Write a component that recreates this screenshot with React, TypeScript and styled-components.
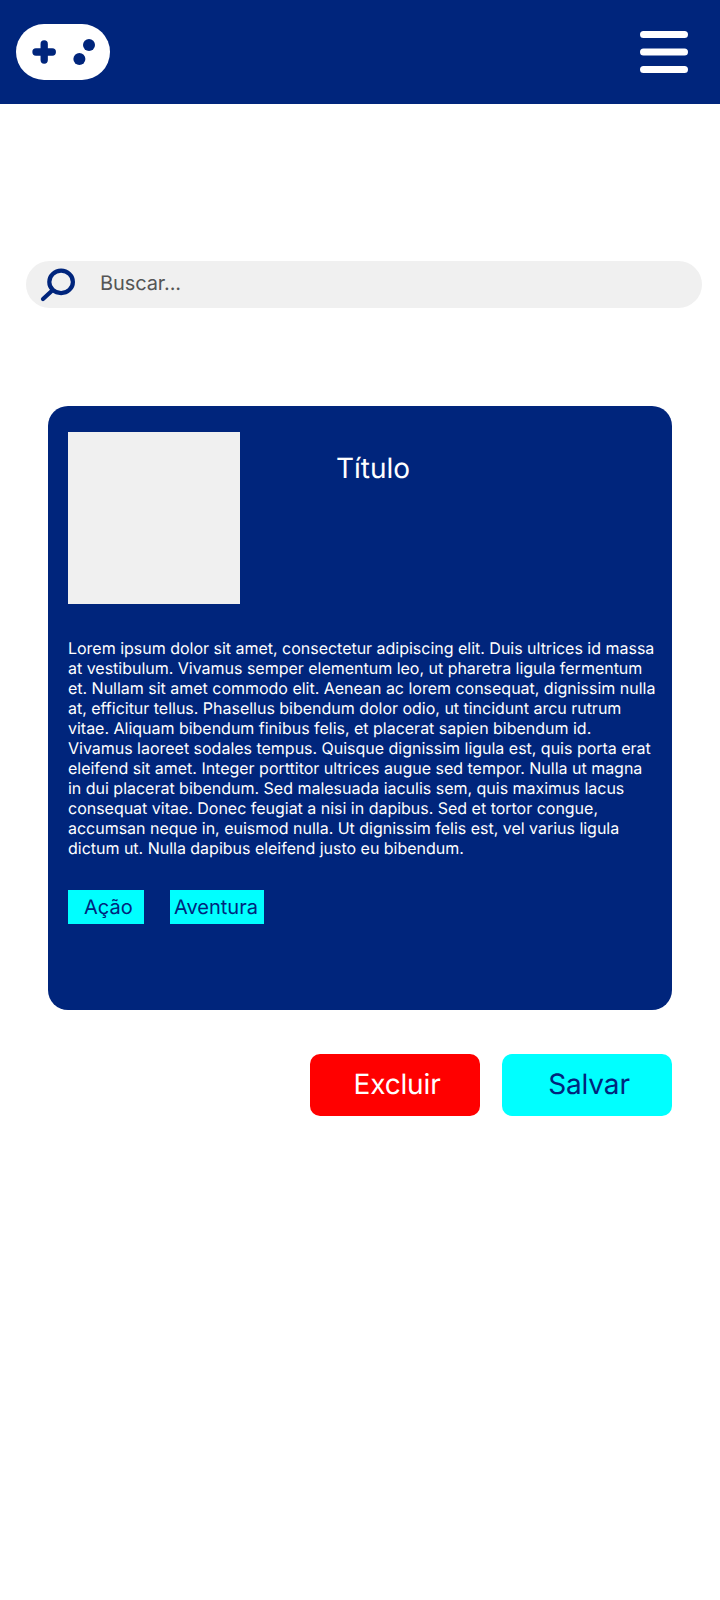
import React from "react";
import styled, { createGlobalStyle } from "styled-components";

const navy = "#00257c";
const cyan = "#00ffff";
const grey = "#f0f0f0";

const GlobalStyle = createGlobalStyle`
  *, *::before, *::after { box-sizing: border-box; }
  body {
    margin: 0;
    background: #fff;
    font-family: Inter, "Liberation Sans", sans-serif;
    text-rendering: geometricPrecision;
  }
  button { font: inherit; border: 0; cursor: pointer; text-rendering: inherit; }
`;

const Page = styled.div`
  min-height: 1600px;
  background: #fff;
`;

const Header = styled.header`
  display: flex;
  align-items: center;
  justify-content: space-between;
  height: 104px;
  padding: 0 32px 0 16px;
  background: ${navy};
`;

const Logo = styled.svg`
  display: block;
  width: 94px;
  height: 56px;
`;

const MenuButton = styled.button`
  width: 48px;
  height: 42px;
  padding: 0;
  background: none;
`;

const MenuIcon = styled.svg`
  display: block;
  width: 48px;
  height: 42px;
`;

const SearchBar = styled.label`
  display: flex;
  align-items: center;
  height: 47px;
  margin: 157px 18px 0 26px;
  padding-left: 14px;
  border-radius: 24px;
  background: ${grey};
`;

const SearchIcon = styled.svg`
  width: 36px;
  height: 34px;
  margin-right: 24px;
`;

const SearchText = styled.span`
  padding-bottom: 3px;
  color: #555;
  font-size: 20px;
  letter-spacing: -0.1px;
  line-height: 24px;
`;

const Card = styled.article`
  height: 604px;
  margin: 98px 48px 0;
  padding: 26px 16px 0 20px;
  border-radius: 20px;
  background: ${navy};
  color: #fff;
`;

const CardHead = styled.div`
  display: flex;
  gap: 96px;
`;

const Cover = styled.div`
  width: 172px;
  height: 172px;
  background: ${grey};
`;

const Title = styled.h1`
  margin: 19px 0 0;
  font-size: 28px;
  font-weight: 400;
  line-height: 34px;
`;

const Description = styled.p`
  margin: 34px 0 0;
  font-size: 16px;
  letter-spacing: -0.014px;
  line-height: 20px;
  white-space: nowrap;
`;

const Tags = styled.div`
  display: flex;
  gap: 26px;
  margin-top: 32px;
`;

const Tag = styled.span<{ $width: number; $inset: number }>`
  width: ${(p) => p.$width}px;
  height: 34px;
  padding-left: ${(p) => p.$inset}px;
  background: ${cyan};
  color: ${navy};
  font-size: 20px;
  line-height: 34px;
`;

const Actions = styled.div`
  display: flex;
  justify-content: flex-end;
  gap: 22px;
  margin: 44px 48px 0;
`;

const ActionButton = styled.button<{ $danger?: boolean }>`
  width: 170px;
  height: 62px;
  padding: 0 0 2px 4px;
  border-radius: 10px;
  background: ${(p) => (p.$danger ? "#ff0000" : cyan)};
  color: ${(p) => (p.$danger ? "#fff" : navy)};
  font-size: 28px;
  letter-spacing: -0.15px;
  line-height: 34px;
`;

const lines = [
  "Lorem ipsum dolor sit amet, consectetur adipiscing elit. Duis ultrices id massa",
  "at vestibulum. Vivamus semper elementum leo, ut pharetra ligula fermentum",
  "et. Nullam sit amet commodo elit. Aenean ac lorem consequat, dignissim nulla",
  "at, efficitur tellus. Phasellus bibendum dolor odio, ut tincidunt arcu rutrum",
  "vitae. Aliquam bibendum finibus felis, et placerat sapien bibendum id.",
  "Vivamus laoreet sodales tempus. Quisque dignissim ligula est, quis porta erat",
  "eleifend sit amet. Integer porttitor ultrices augue sed tempor. Nulla ut magna",
  "in dui placerat bibendum. Sed malesuada iaculis sem, quis maximus lacus",
  "consequat vitae. Donec feugiat a nisi in dapibus. Sed et tortor congue,",
  "accumsan neque in, euismod nulla. Ut dignissim felis est, vel varius ligula",
  "dictum ut. Nulla dapibus eleifend justo eu bibendum.",
];

export default function App() {
  return (
    <Page>
      <GlobalStyle />
      <Header>
        <Logo viewBox="0 0 94 56" aria-hidden="true">
          <rect width="94" height="56" rx="28" fill="#fff" />
          <path d="M20 28H36.3M28.2 19.9V36" stroke={navy} strokeWidth="7.3" strokeLinecap="round" />
          <circle cx="73" cy="21" r="6" fill={navy} />
          <circle cx="63.4" cy="35" r="6" fill={navy} />
        </Logo>
        <MenuButton aria-label="Menu">
          <MenuIcon viewBox="0 0 48 42" fill="none" stroke="#fff" strokeWidth="7" strokeLinecap="round">
            <path d="M3.5 3.5H44.5M3.5 21H44.5M3.5 38.5H44.5" />
          </MenuIcon>
        </MenuButton>
      </Header>
      <SearchBar>
        <SearchIcon viewBox="0 0 36 34" fill="none" stroke={navy} strokeWidth="4.2" aria-hidden="true">
          <ellipse cx="21.1" cy="13.9" rx="11.8" ry="11.2" />
          <path d="M12.5 22.3L3 31" strokeLinecap="round" />
        </SearchIcon>
        <SearchText>Buscar...</SearchText>
      </SearchBar>
      <Card>
        <CardHead>
          <Cover />
          <Title>Título</Title>
        </CardHead>
        <Description>
          {lines.map((line) => (
            <React.Fragment key={line}>
              {line}
              <br />
            </React.Fragment>
          ))}
        </Description>
        <Tags>
          <Tag $width={76} $inset={16}>Ação</Tag>
          <Tag $width={94} $inset={4}>Aventura</Tag>
        </Tags>
      </Card>
      <Actions>
        <ActionButton $danger>Excluir</ActionButton>
        <ActionButton>Salvar</ActionButton>
      </Actions>
    </Page>
  );
}
